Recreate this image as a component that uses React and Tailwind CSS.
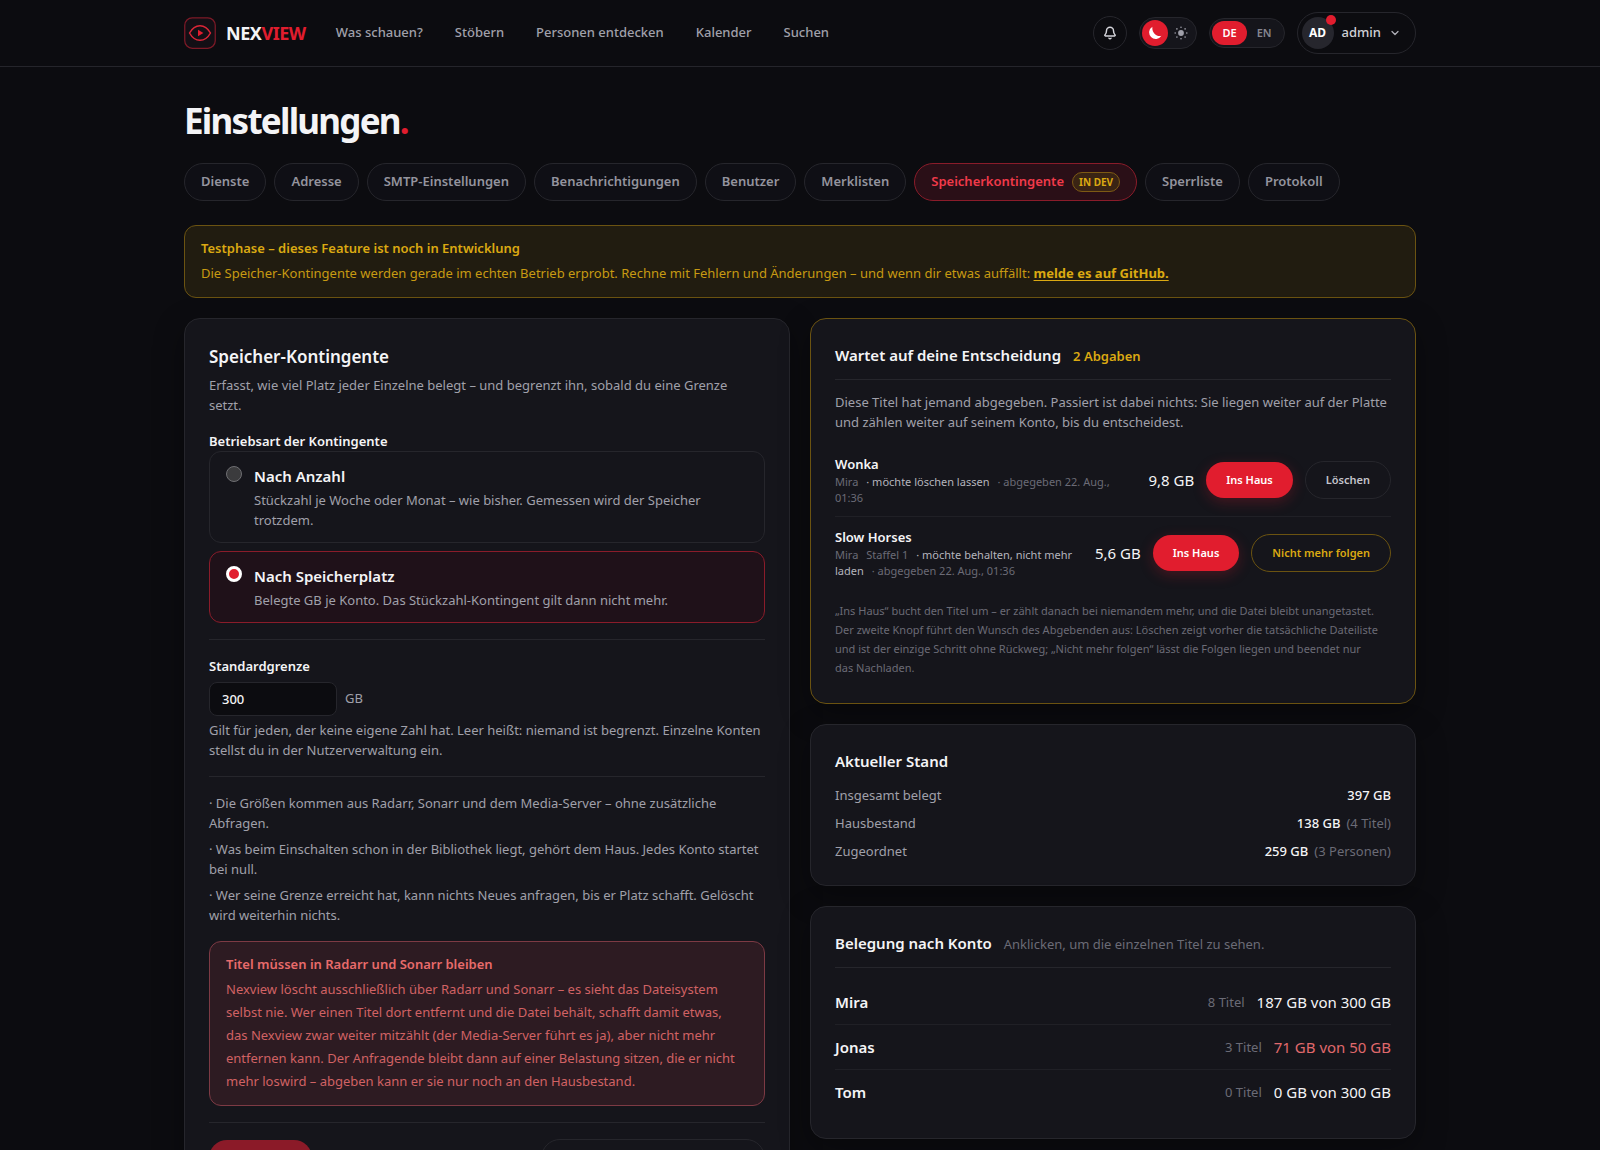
import { useState } from "react";
import { Bell, ChevronDown } from "lucide-react";

const navItems = ["Was schauen?", "Stöbern", "Personen entdecken", "Kalender", "Suchen"];

const tabs = [
  { label: "Dienste" },
  { label: "Adresse" },
  { label: "SMTP-Einstellungen" },
  { label: "Benachrichtigungen" },
  { label: "Benutzer" },
  { label: "Merklisten" },
  { label: "Speicherkontingente", badge: "IN DEV" },
  { label: "Sperrliste" },
  { label: "Protokoll" },
];

const modes = [
  {
    id: "count",
    title: "Nach Anzahl",
    text: "Stückzahl je Woche oder Monat – wie bisher. Gemessen wird der Speicher trotzdem.",
  },
  {
    id: "storage",
    title: "Nach Speicherplatz",
    text: "Belegte GB je Konto. Das Stückzahl-Kontingent gilt dann nicht mehr.",
  },
];

const notes = [
  "· Die Größen kommen aus Radarr, Sonarr und dem Media-Server – ohne zusätzliche Abfragen.",
  "· Was beim Einschalten schon in der Bibliothek liegt, gehört dem Haus. Jedes Konto startet bei null.",
  "· Wer seine Grenze erreicht hat, kann nichts Neues anfragen, bis er Platz schafft. Gelöscht wird weiterhin nichts.",
];

const handovers = [
  {
    title: "Wonka",
    user: "Mira",
    wish: "· möchte löschen lassen",
    date: "· abgegeben 22. Aug., 01:36",
    size: "9,8 GB",
    action: "Löschen",
  },
  {
    title: "Slow Horses",
    user: "Mira",
    season: "Staffel 1",
    wish: "· möchte behalten, nicht mehr laden",
    date: "· abgegeben 22. Aug., 01:36",
    size: "5,6 GB",
    action: "Nicht mehr folgen",
    warn: true,
  },
];

const totals = [
  { label: "Insgesamt belegt", value: "397 GB" },
  { label: "Hausbestand", value: "138 GB", extra: "(4 Titel)" },
  { label: "Zugeordnet", value: "259 GB", extra: "(3 Personen)" },
];

const accounts = [
  { name: "Mira", titles: "8 Titel", usage: "187 GB von 300 GB" },
  { name: "Jonas", titles: "3 Titel", usage: "71 GB von 50 GB", over: true },
  { name: "Tom", titles: "0 Titel", usage: "0 GB von 300 GB" },
];

const Logo = () => (
  <a href="#" className="flex items-center gap-[10px]">
    <svg viewBox="0 0 32 32" className="h-8 w-8" fill="none" aria-hidden="true">
      <rect x="0.75" y="0.75" width="30.5" height="30.5" rx="7.5" fill="#130f15" stroke="#7d1a27" strokeWidth="1.25" />
      <path
        d="M5.5 16C8.2 11.2 11.6 8.7 16 8.7s7.8 2.5 10.5 7.3C23.8 20.8 20.4 23.3 16 23.3S8.2 20.8 5.5 16Z"
        stroke="#dc2637"
        strokeWidth="1.5"
        strokeLinejoin="round"
      />
      <path d="M14 12.8v6.4l5.4-3.2Z" fill="#e11d2e" />
    </svg>
    <span className="text-[18px] leading-6 font-bold tracking-tight text-[#f4f4f6]">
      NEX<span className="text-[#e11d2e]">VIEW</span>
    </span>
  </a>
);

const Sun = () => (
  <svg viewBox="0 0 16 16" className="h-4 w-4" fill="#a0a0aa" aria-hidden="true">
    <circle cx="8" cy="8" r="2.9" />
    <circle cx="8" cy="2.2" r="0.8" />
    <circle cx="8" cy="13.8" r="0.8" />
    <circle cx="2.2" cy="8" r="0.8" />
    <circle cx="13.8" cy="8" r="0.8" />
    <circle cx="3.9" cy="3.9" r="0.8" />
    <circle cx="12.1" cy="3.9" r="0.8" />
    <circle cx="3.9" cy="12.1" r="0.8" />
    <circle cx="12.1" cy="12.1" r="0.8" />
  </svg>
);

const Moon = () => (
  <svg viewBox="0 0 16 16" className="h-4 w-4" aria-hidden="true">
    <path d="M5.4 1.7A6.6 6.6 0 1 0 14.4 10.8C9.4 12 4.6 7.4 5.4 1.7Z" fill="#ffffff" />
  </svg>
);

const Header = () => (
  <header className="border-b border-[#25252b]">
    <div className="mx-auto flex h-[66px] max-w-7xl items-center px-6">
      <Logo />
      <nav className="ml-[30px] flex items-center gap-8">
        {navItems.map((item) => (
          <a key={item} href="#" className="text-[13px] font-medium text-[#a0a0aa]">
            {item}
          </a>
        ))}
      </nav>
      <div className="ml-auto flex items-center gap-3">
        <button
          aria-label="Benachrichtigungen"
          className="flex h-[34px] w-[34px] items-center justify-center rounded-full border border-[#26262c] text-[#d4d4da]"
        >
          <Bell className="h-[14px] w-[14px]" strokeWidth={2.5} />
        </button>
        <div className="flex items-center rounded-full border border-[#26262c] bg-[#15151b] p-[2px]">
          <button aria-label="Dunkel" className="flex h-[26px] w-[26px] items-center justify-center rounded-full bg-[#e11d2e]">
            <Moon />
          </button>
          <button aria-label="Hell" className="flex h-[26px] w-[26px] items-center justify-center rounded-full">
            <Sun />
          </button>
        </div>
        <div className="flex items-center rounded-full border border-[#26262c] bg-[#15151b] p-[2px] text-[11px] font-semibold">
          <button className="h-6 rounded-full bg-[#e11d2e] px-[10px] text-white">DE</button>
          <button className="h-6 px-[10px] text-[#85858f]">EN</button>
        </div>
        <button className="flex h-[42px] items-center gap-2 rounded-full border border-[#26262c] pr-[14px] pl-1">
          <span className="relative flex h-8 w-8 items-center justify-center rounded-full bg-[#26262d] text-[12px] font-bold text-white">
            AD
            <span className="absolute -top-[2px] -right-[2px] h-[10px] w-[10px] rounded-full bg-[#e11d2e]" />
          </span>
          <span className="text-[13px] font-medium text-[#d0d0d6]">admin</span>
          <ChevronDown className="h-3 w-3 text-[#b0b0b8]" strokeWidth={2.5} />
        </button>
      </div>
    </div>
  </header>
);

const Card = ({ highlight, children }) => (
  <section
    className={`rounded-2xl border bg-[#15151b] p-6 shadow-[0_10px_30px_rgba(0,0,0,0.35)] ${
      highlight ? "border-[#6b5311]" : "border-[#26262c]"
    }`}
  >
    {children}
  </section>
);

const QuotaSettings = () => {
  const [mode, setMode] = useState("storage");
  const [limit, setLimit] = useState("300");

  return (
    <Card>
      <h2 className="text-[17px] leading-7 font-semibold text-[#f4f4f6]">Speicher-Kontingente</h2>
      <p className="mt-1 pr-4 text-[13px] leading-5 text-[#a0a0aa]">
        Erfasst, wie viel Platz jeder Einzelne belegt – und begrenzt ihn, sobald du eine Grenze setzt.
      </p>

      <fieldset className="mt-4">
        <legend className="text-[13px] leading-5 font-semibold text-[#f4f4f6]">Betriebsart der Kontingente</legend>
        <div className="flex flex-col gap-2">
          {modes.map((item) => (
            <label
              key={item.id}
              className={`flex items-start gap-3 rounded-xl border px-4 py-3 ${
                mode === item.id ? "border-[#8a1c2a] bg-[#1f1119]" : "border-[#26262c]"
              }`}
            >
              <input
                type="radio"
                name="mode"
                checked={mode === item.id}
                onChange={() => setMode(item.id)}
                className="mt-[2px] h-4 w-4 shrink-0 appearance-none rounded-full border border-[#6e6e72] bg-[#3b3b3d] checked:border-[3px] checked:border-white checked:bg-[#e11d2e]"
              />
              <span>
                <span className="block text-[15px] leading-6 font-semibold text-[#f4f4f6]">{item.title}</span>
                <span className="mt-0.5 block text-[13px] leading-5 text-[#a0a0aa]">{item.text}</span>
              </span>
            </label>
          ))}
        </div>
      </fieldset>

      <div className="mt-4 border-t border-[#26262c] pt-4">
        <label htmlFor="limit" className="block text-[13px] leading-5 font-semibold text-[#f4f4f6]">
          Standardgrenze
        </label>
        <div className="mt-[6px] flex items-center gap-2">
          <input
            id="limit"
            value={limit}
            onChange={(e) => setLimit(e.target.value)}
            className="h-[34px] w-32 rounded-lg border border-[#26262c] bg-[#0c0c10] px-3 text-[13px] font-medium text-[#f4f4f6]"
          />
          <span className="text-[13px] text-[#a0a0aa]">GB</span>
        </div>
        <p className="mt-1 text-[13px] leading-5 text-[#a0a0aa]">
          Gilt für jeden, der keine eigene Zahl hat. Leer heißt: niemand ist begrenzt. Einzelne Konten stellst du in der
          Nutzerverwaltung ein.
        </p>
      </div>

      <ul className="mt-4 space-y-[6px] border-t border-[#26262c] pt-4 text-[13px] leading-5 text-[#a0a0aa]">
        {notes.map((note) => (
          <li key={note}>{note}</li>
        ))}
      </ul>

      <div className="mt-4 rounded-xl border border-[#7d3a44] bg-[#2d1b22] px-4 py-3 text-[13px] text-[#e86b6b]">
        <p className="leading-5 font-semibold">Titel müssen in Radarr und Sonarr bleiben</p>
        <p className="mt-1 pr-2 leading-[23px] text-[#d16264]">
          Nexview löscht ausschließlich über Radarr und Sonarr – es sieht das Dateisystem selbst nie. Wer einen Titel
          dort entfernt und die Datei behält, schafft damit etwas, das Nexview zwar weiter mitzählt (der Media-Server
          führt es ja), aber nicht mehr entfernen kann. Der Anfragende bleibt dann auf einer Belastung sitzen, die er
          nicht mehr loswird – abgeben kann er sie nur noch an den Hausbestand.
        </p>
      </div>

      <div className="mt-4 flex items-center justify-between border-t border-[#26262c] pt-4">
        <button disabled className="h-9 rounded-full bg-[#8b1a28] px-5 text-[13px] font-semibold text-white/60">
          Speichern
        </button>
        <button className="h-[38px] rounded-full border border-[#26262c] px-6 text-[13px] font-semibold text-[#d0d0d6]">
          Speicherstand neu einlesen
        </button>
      </div>
    </Card>
  );
};

const Handovers = () => (
  <Card highlight>
    <div className="flex items-baseline gap-3 border-b border-[#26262c] pb-3">
      <h2 className="text-[15px] leading-6 font-semibold text-[#f4f4f6]">Wartet auf deine Entscheidung</h2>
      <span className="text-[13px] leading-5 font-semibold text-[#dba912]">2 Abgaben</span>
    </div>
    <p className="mt-3 text-[13px] leading-5 text-[#a0a0aa]">
      Diese Titel hat jemand abgegeben. Passiert ist dabei nichts: Sie liegen weiter auf der Platte und zählen weiter
      auf seinem Konto, bis du entscheidest.
    </p>
    <ul className="mt-3 divide-y divide-[#202026]">
      {handovers.map((item) => (
        <li key={item.title} className="flex items-center gap-3 py-[10px]">
          <div className="min-w-0 flex-1">
            <p className="text-[13px] leading-5 font-semibold text-[#f4f4f6]">{item.title}</p>
            <p className="text-[11px] leading-4 text-[#6b6b76]">
              {item.user}
              {item.season && <span className="ml-2">{item.season}</span>}
              <span className="ml-2 text-[#b4b4bd]">{item.wish}</span>
              <span className="ml-2">{item.date}</span>
            </p>
          </div>
          <span className="text-[15px] leading-6 whitespace-nowrap text-[#f4f4f6]">{item.size}</span>
          <button className="h-9 rounded-full bg-[#e11d2e] px-5 text-[11px] font-semibold whitespace-nowrap text-white shadow-[0_4px_14px_rgba(225,29,46,0.25)]">
            Ins Haus
          </button>
          <button
            className={`h-[38px] rounded-full border px-5 text-[11px] font-semibold whitespace-nowrap ${
              item.warn ? "border-[#6b5311] text-[#dba912]" : "border-[#26262c] text-[#c4c4cb]"
            }`}
          >
            {item.action}
          </button>
        </li>
      ))}
    </ul>
    <p className="mt-3 pr-[10px] pb-[2px] text-[11px] leading-[19px] text-[#6b6b76]">
      „Ins Haus“ bucht den Titel um – er zählt danach bei niemandem mehr, und die Datei bleibt unangetastet. Der zweite
      Knopf führt den Wunsch des Abgebenden aus: Löschen zeigt vorher die tatsächliche Dateiliste und ist der einzige
      Schritt ohne Rückweg; „Nicht mehr folgen“ lässt die Folgen liegen und beendet nur das Nachladen.
    </p>
  </Card>
);

const Totals = () => (
  <Card>
    <h2 className="text-[15px] leading-6 font-semibold text-[#f4f4f6]">Aktueller Stand</h2>
    <dl className="mt-3 space-y-2 text-[13px] leading-5">
      {totals.map((row) => (
        <div key={row.label} className="flex justify-between">
          <dt className="text-[#a0a0aa]">{row.label}</dt>
          <dd className="font-medium text-[#f4f4f6]">
            {row.value}
            {row.extra && <span className="ml-[6px] font-normal text-[#6b6b76]">{row.extra}</span>}
          </dd>
        </div>
      ))}
    </dl>
  </Card>
);

const Accounts = () => (
  <Card>
    <div className="flex items-baseline gap-3 border-b border-[#26262c] pb-3">
      <h2 className="text-[15px] leading-6 font-semibold text-[#f4f4f6]">Belegung nach Konto</h2>
      <span className="text-[13px] leading-5 text-[#6b6b76]">Anklicken, um die einzelnen Titel zu sehen.</span>
    </div>
    <ul className="mt-3 divide-y divide-[#202026]">
      {accounts.map((account) => (
        <li key={account.name}>
          <button className="flex w-full items-center gap-3 py-[10px] text-[15px] leading-6">
            <span className="mr-auto font-semibold text-[#f4f4f6]">{account.name}</span>
            <span className="text-[13px] text-[#6b6b76]">{account.titles}</span>
            <span className={account.over ? "text-[#e0696c]" : "text-[#f4f4f6]"}>{account.usage}</span>
          </button>
        </li>
      ))}
    </ul>
  </Card>
);

export default function App() {
  return (
    <div className="min-h-screen bg-[#0c0c10] font-['Noto_Sans','Open_Sans',sans-serif] text-[#f4f4f6]">
      <Header />
      <main className="mx-auto max-w-7xl px-6 pt-8 pb-10">
        <h1 className="text-[35px] leading-[44px] font-bold tracking-tighter">
          Einstellungen<span className="text-[#e11d2e]">.</span>
        </h1>

        <div className="mt-5 flex flex-wrap gap-2">
          {tabs.map((tab) => (
            <button
              key={tab.label}
              className={`flex h-[38px] items-center gap-2 rounded-full border px-4 text-[13px] font-semibold ${
                tab.badge ? "border-[#8a1c2a] bg-[#2a0f17] text-[#f03a4a]" : "border-[#26262c] bg-[#0f0f15] text-[#94949e]"
              }`}
            >
              {tab.label}
              {tab.badge && (
                <span className="rounded-full border border-[#7d5a14] bg-[#3a2414] px-[6px] text-[10px] leading-[18px] font-bold text-[#dba912]">
                  {tab.badge}
                </span>
              )}
            </button>
          ))}
        </div>

        <div className="mt-6 rounded-xl border border-[#6b5311] bg-[#211c10] px-4 py-3 text-[13px] text-[#dba912]">
          <p className="leading-5 font-semibold">Testphase – dieses Feature ist noch in Entwicklung</p>
          <p className="mt-1 leading-[23px] text-[#c79a12]">
            Die Speicher-Kontingente werden gerade im echten Betrieb erprobt. Rechne mit Fehlern und Änderungen – und
            wenn dir etwas auffällt:{" "}
            <a href="#" className="font-bold text-[#dba912] underline underline-offset-2">
              melde es auf GitHub.
            </a>
          </p>
        </div>

        <div className="mt-5 grid items-start gap-5 lg:grid-cols-2">
          <QuotaSettings />
          <div className="flex flex-col gap-5">
            <Handovers />
            <Totals />
            <Accounts />
          </div>
        </div>
      </main>
    </div>
  );
}
